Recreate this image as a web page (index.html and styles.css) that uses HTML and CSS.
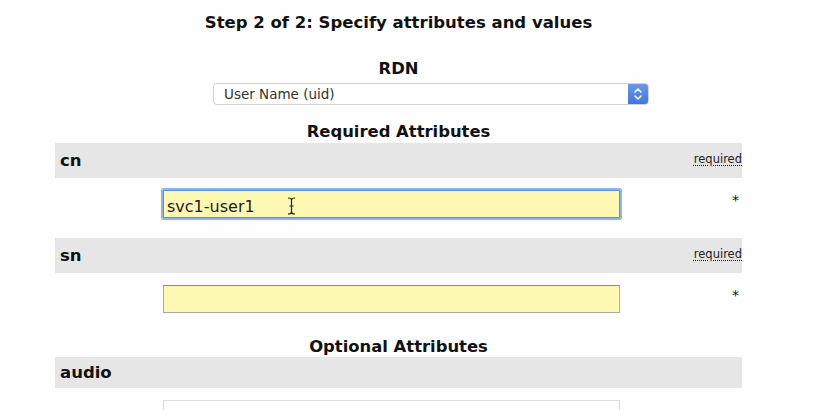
FILE: index.html
```html
<!DOCTYPE html>
<html>
<head>
<meta charset="utf-8">
<link rel="stylesheet" href="styles.css">
</head>
<body>
<main class="page">
  <h2 class="step">Step 2 of 2: Specify attributes and values</h2>
  <h3 class="section rdn-title">RDN</h3>
  <div class="select-wrap">
    <div class="select">
      <span class="select-text">User Name (uid)</span>
      <span class="select-btn">
        <svg width="10" height="14" viewBox="0 0 10 14"><path d="M2 5 L5 2 L8 5 M2 9 L5 12 L8 9" fill="none" stroke="#fff" stroke-width="1.6" stroke-linecap="round" stroke-linejoin="round"/></svg>
      </span>
    </div>
  </div>
  <h3 class="section req-title">Required Attributes</h3>
  <div class="bar bar-req"><span class="attr-name">cn</span><abbr class="note" title="required">required</abbr></div>
  <div class="attr-row row-cn">
    <span></span>
    <div class="input-wrap">
      <div class="input focused">svc1-user1</div>
      <svg class="ibeam" width="9" height="18" viewBox="0 0 9 18"><path d="M1 1 Q4.5 1 4.5 3 Q4.5 1 8 1 M4.5 3 V15 M1 17 Q4.5 17 4.5 15 Q4.5 17 8 17 M2.5 9 H6.5" fill="none" stroke="#222" stroke-width="1.2"/></svg>
    </div>
    <span class="star">*</span>
  </div>
  <div class="bar bar-req"><span class="attr-name">sn</span><abbr class="note" title="required">required</abbr></div>
  <div class="attr-row row-sn">
    <span></span>
    <div class="input-wrap"><div class="input"></div></div>
    <span class="star">*</span>
  </div>
  <h3 class="section opt-title">Optional Attributes</h3>
  <div class="bar bar-opt"><span class="attr-name">audio</span></div>
  <div class="attr-row row-audio">
    <span></span>
    <div class="input-wrap"><div class="input plain"></div></div>
    <span></span>
  </div>
</main>
</body>
</html>
```
FILE: styles.css
```css
html, body {
  margin: 0;
  padding: 0;
  background: #fefefe;
  overflow: hidden;
  height: 410px;
}
.page {
  width: 687px;
  margin-left: 55px;
  font-family: "DejaVu Sans", Verdana, sans-serif;
  color: #111;
}
.step {
  margin: 0;
  padding-top: 13px;
  line-height: 20px;
  font-size: 16.5px;
  font-weight: bold;
  text-align: center;
}
.section {
  margin: 0;
  font-size: 16.4px;
  font-weight: bold;
  text-align: center;
  line-height: 20px;
}
.rdn-title { margin-top: 26px; }
.select-wrap {
  padding-top: 4px;
  padding-left: 158px;
}
.select {
  width: 436px;
  height: 22px;
  box-sizing: border-box;
  border: 1px solid #d2d2d2;
  border-radius: 4px;
  display: flex;
  align-items: center;
  background: #fff;
  overflow: hidden;
}
.select-text {
  flex: 1;
  padding-left: 10px;
  font-size: 13.5px;
  color: #333;
}
.select-btn {
  width: 20px;
  height: 22px;
  background: linear-gradient(#6b9bea, #3f74dc);
  display: flex;
  align-items: center;
  justify-content: center;
}
.req-title { margin-top: 17px; }
.bar {
  background: #e6e6e6;
  display: flex;
  align-items: center;
  justify-content: space-between;
  padding: 0 0 0 5px;
  box-sizing: border-box;
}
.bar-req { height: 35px; margin-top: 1px; }
.row-cn + .bar-req { margin-top: 0; }
.bar-opt { height: 31px; margin-top: 0; }
.attr-name {
  font-weight: bold;
  font-size: 16.5px;
}
.note {
  font-size: 11.5px;
  color: #222;
  text-decoration: underline dotted;
  text-underline-offset: 2px;
  margin-bottom: 4px;
}
.attr-row {
  display: grid;
  grid-template-columns: 108px 457px 1fr;
  align-items: start;
}
.row-cn { padding: 12px 0 20px; }
.row-sn { padding: 12px 0 0; }
.row-audio { padding-top: 12px; }
.input-wrap { position: relative; }
.input {
  height: 28px;
  box-sizing: border-box;
  border: 1px solid #a9a9a9;
  border-top-color: #8a8a8a;
  background: #fdf9b2;
  font-family: "DejaVu Sans", Verdana, sans-serif;
  font-size: 16px;
  line-height: 31px;
  padding-left: 3px;
  color: #222;
  overflow: hidden;
}
.input.focused {
  border-color: #5d8fe0;
  box-shadow: 0 0 0 2px #8fb3ee;
  border-radius: 1px;
}
.input.plain { background: #fff; border-color: #ddd; }
.ibeam {
  position: absolute;
  left: 124px;
  top: 7px;
}
.star {
  text-align: right;
  padding-right: 3px;
  font-size: 14px;
  line-height: 14px;
  padding-top: 3px;
}
.opt-title { margin-top: 24px; }
```
